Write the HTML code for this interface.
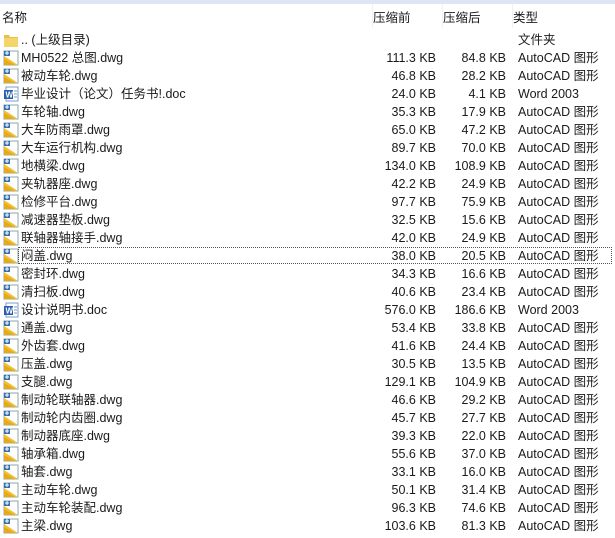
<!DOCTYPE html>
<html><head><meta charset="utf-8"><style>
body{margin:0;width:615px;height:538px;background:#fff;overflow:hidden;position:relative;font-family:"Liberation Sans","Noto Sans CJK SC",sans-serif;font-size:12.5px;color:#1a1a1a}
.top{position:absolute;left:0;top:0;width:615px;height:4px;background:#dce7f3}
.hd{position:absolute;top:7px;font-size:12.5px}
.sep{position:absolute;top:4px;width:1px;height:24px;background:#eef1f5}
.r{position:absolute;left:0;width:615px;height:18px;line-height:18px;white-space:nowrap}
.r svg{position:absolute;left:3px;top:1px}
.n{position:absolute;left:21px}
.a{position:absolute;right:179px;text-align:right}
.b{position:absolute;right:109px;text-align:right}
.t{position:absolute;left:518px}
.focus{position:absolute;left:18px;top:247px;width:594px;height:17px;border:1px dotted #555;box-sizing:border-box}
</style></head><body>
<svg width="0" height="0" style="position:absolute">
<defs>
<g id="dwg"><rect x="1" y="1" width="14" height="14" fill="#fff" stroke="#8aa"/><polygon points="1,15 1,6 15,15" fill="#f0c030"/><polygon points="1,15 1,9 12,15" fill="#e8a818"/><rect x="1" y="1" width="6" height="5" fill="#3a6fb0"/><path d="M2 3 L6 3 M4 1 L4 5" stroke="#fff" stroke-width="1"/></g>
<g id="fold"><path d="M1 3 L6 3 L7 5 L15 5 L15 15 L1 15 Z" fill="#e8c050"/><path d="M1 6 L15 6 L15 15 L1 15Z" fill="#f4d56a"/></g>
<g id="doc"><rect x="3" y="1" width="12" height="14" fill="#fff" stroke="#7a9cc8"/><rect x="1" y="4" width="9" height="9" fill="#2b5fae"/><text x="2.5" y="11.5" font-size="8" fill="#fff" font-family="Liberation Sans" font-weight="bold">W</text><path d="M11 5h3M11 8h3M11 11h3" stroke="#7a9cc8"/></g>
</defs></svg>
<div class="top"></div>
<div class="hd" style="left:2px">名称</div>
<div class="hd" style="left:373px">压缩前</div>
<div class="hd" style="left:443px">压缩后</div>
<div class="hd" style="left:513px">类型</div>
<div class="sep" style="left:372px"></div><div class="sep" style="left:442px"></div><div class="sep" style="left:512px"></div>

<div class="r" style="top:31px"><svg width="16" height="16"><use href="#fold"/></svg><span class="n">.. (上级目录)</span><span class="t">文件夹</span></div>
<div class="r" style="top:49px"><svg width="16" height="16"><use href="#dwg"/></svg><span class="n">MH0522 总图.dwg</span><span class="a">111.3 KB</span><span class="b">84.8 KB</span><span class="t">AutoCAD 图形</span></div>
<div class="r" style="top:67px"><svg width="16" height="16"><use href="#dwg"/></svg><span class="n">被动车轮.dwg</span><span class="a">46.8 KB</span><span class="b">28.2 KB</span><span class="t">AutoCAD 图形</span></div>
<div class="r" style="top:85px"><svg width="16" height="16"><use href="#doc"/></svg><span class="n">毕业设计（论文）任务书!.doc</span><span class="a">24.0 KB</span><span class="b">4.1 KB</span><span class="t">Word 2003</span></div>
<div class="r" style="top:103px"><svg width="16" height="16"><use href="#dwg"/></svg><span class="n">车轮轴.dwg</span><span class="a">35.3 KB</span><span class="b">17.9 KB</span><span class="t">AutoCAD 图形</span></div>
<div class="r" style="top:121px"><svg width="16" height="16"><use href="#dwg"/></svg><span class="n">大车防雨罩.dwg</span><span class="a">65.0 KB</span><span class="b">47.2 KB</span><span class="t">AutoCAD 图形</span></div>
<div class="r" style="top:139px"><svg width="16" height="16"><use href="#dwg"/></svg><span class="n">大车运行机构.dwg</span><span class="a">89.7 KB</span><span class="b">70.0 KB</span><span class="t">AutoCAD 图形</span></div>
<div class="r" style="top:157px"><svg width="16" height="16"><use href="#dwg"/></svg><span class="n">地横梁.dwg</span><span class="a">134.0 KB</span><span class="b">108.9 KB</span><span class="t">AutoCAD 图形</span></div>
<div class="r" style="top:175px"><svg width="16" height="16"><use href="#dwg"/></svg><span class="n">夹轨器座.dwg</span><span class="a">42.2 KB</span><span class="b">24.9 KB</span><span class="t">AutoCAD 图形</span></div>
<div class="r" style="top:193px"><svg width="16" height="16"><use href="#dwg"/></svg><span class="n">检修平台.dwg</span><span class="a">97.7 KB</span><span class="b">75.9 KB</span><span class="t">AutoCAD 图形</span></div>
<div class="r" style="top:211px"><svg width="16" height="16"><use href="#dwg"/></svg><span class="n">减速器垫板.dwg</span><span class="a">32.5 KB</span><span class="b">15.6 KB</span><span class="t">AutoCAD 图形</span></div>
<div class="r" style="top:229px"><svg width="16" height="16"><use href="#dwg"/></svg><span class="n">联轴器轴接手.dwg</span><span class="a">42.0 KB</span><span class="b">24.9 KB</span><span class="t">AutoCAD 图形</span></div>
<div class="r" style="top:247px"><svg width="16" height="16"><use href="#dwg"/></svg><span class="n">闷盖.dwg</span><span class="a">38.0 KB</span><span class="b">20.5 KB</span><span class="t">AutoCAD 图形</span></div>
<div class="focus"></div>
<div class="r" style="top:265px"><svg width="16" height="16"><use href="#dwg"/></svg><span class="n">密封环.dwg</span><span class="a">34.3 KB</span><span class="b">16.6 KB</span><span class="t">AutoCAD 图形</span></div>
<div class="r" style="top:283px"><svg width="16" height="16"><use href="#dwg"/></svg><span class="n">清扫板.dwg</span><span class="a">40.6 KB</span><span class="b">23.4 KB</span><span class="t">AutoCAD 图形</span></div>
<div class="r" style="top:301px"><svg width="16" height="16"><use href="#doc"/></svg><span class="n">设计说明书.doc</span><span class="a">576.0 KB</span><span class="b">186.6 KB</span><span class="t">Word 2003</span></div>
<div class="r" style="top:319px"><svg width="16" height="16"><use href="#dwg"/></svg><span class="n">通盖.dwg</span><span class="a">53.4 KB</span><span class="b">33.8 KB</span><span class="t">AutoCAD 图形</span></div>
<div class="r" style="top:337px"><svg width="16" height="16"><use href="#dwg"/></svg><span class="n">外齿套.dwg</span><span class="a">41.6 KB</span><span class="b">24.4 KB</span><span class="t">AutoCAD 图形</span></div>
<div class="r" style="top:355px"><svg width="16" height="16"><use href="#dwg"/></svg><span class="n">压盖.dwg</span><span class="a">30.5 KB</span><span class="b">13.5 KB</span><span class="t">AutoCAD 图形</span></div>
<div class="r" style="top:373px"><svg width="16" height="16"><use href="#dwg"/></svg><span class="n">支腿.dwg</span><span class="a">129.1 KB</span><span class="b">104.9 KB</span><span class="t">AutoCAD 图形</span></div>
<div class="r" style="top:391px"><svg width="16" height="16"><use href="#dwg"/></svg><span class="n">制动轮联轴器.dwg</span><span class="a">46.6 KB</span><span class="b">29.2 KB</span><span class="t">AutoCAD 图形</span></div>
<div class="r" style="top:409px"><svg width="16" height="16"><use href="#dwg"/></svg><span class="n">制动轮内齿圈.dwg</span><span class="a">45.7 KB</span><span class="b">27.7 KB</span><span class="t">AutoCAD 图形</span></div>
<div class="r" style="top:427px"><svg width="16" height="16"><use href="#dwg"/></svg><span class="n">制动器底座.dwg</span><span class="a">39.3 KB</span><span class="b">22.0 KB</span><span class="t">AutoCAD 图形</span></div>
<div class="r" style="top:445px"><svg width="16" height="16"><use href="#dwg"/></svg><span class="n">轴承箱.dwg</span><span class="a">55.6 KB</span><span class="b">37.0 KB</span><span class="t">AutoCAD 图形</span></div>
<div class="r" style="top:463px"><svg width="16" height="16"><use href="#dwg"/></svg><span class="n">轴套.dwg</span><span class="a">33.1 KB</span><span class="b">16.0 KB</span><span class="t">AutoCAD 图形</span></div>
<div class="r" style="top:481px"><svg width="16" height="16"><use href="#dwg"/></svg><span class="n">主动车轮.dwg</span><span class="a">50.1 KB</span><span class="b">31.4 KB</span><span class="t">AutoCAD 图形</span></div>
<div class="r" style="top:499px"><svg width="16" height="16"><use href="#dwg"/></svg><span class="n">主动车轮装配.dwg</span><span class="a">96.3 KB</span><span class="b">74.6 KB</span><span class="t">AutoCAD 图形</span></div>
<div class="r" style="top:517px"><svg width="16" height="16"><use href="#dwg"/></svg><span class="n">主梁.dwg</span><span class="a">103.6 KB</span><span class="b">81.3 KB</span><span class="t">AutoCAD 图形</span></div>
</body></html>
